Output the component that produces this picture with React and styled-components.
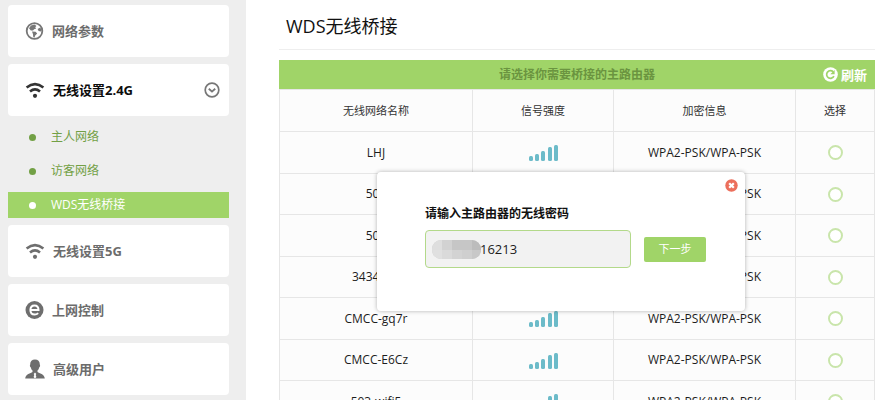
import React, { useState } from 'react'
import styled, { createGlobalStyle } from 'styled-components';

const GlobalStyle = createGlobalStyle`
  * {
    box-sizing: border-box;
  }

  body {
    margin: 0;
    background: #fff;
    color: #1c1c1c;
    font-family: "Open Sans", "Noto Sans CJK SC", sans-serif;
    font-size: 12px;
    overflow: hidden;
  }

  button, input {
    font-family: inherit;
  }
`

const Page = styled.div`
  display: grid;
  grid-template-columns: 246px 1fr;
  height: 100vh;
`

const Sidebar = styled.nav`
  display: flex;
  flex-direction: column;
  gap: 7px;
  padding: 5px 17px 5px 8px;
  background: #eeeeee;
  overflow: hidden;
`

const MenuButton = styled.button`
  display: flex;
  align-items: center;
  flex: none;
  gap: 8px;
  width: 100%;
  height: 52px;
  padding: 0 9px 0 17px;
  border: 0;
  border-radius: 4px;
  background: #fff;
  color: ${(props) => (props.$active ? '#0c0c0c' : '#6c6c6c')};
  font-size: 13px;
  font-weight: 700;
  line-height: 20px;
  text-align: left;
  cursor: pointer;

  span {
    flex: 1;
  }
`

const SubMenu = styled.ul`
  display: flex;
  flex-direction: column;
  gap: 8px;
  margin: 0;
  padding: 1px 0 0;
  list-style: none;
`

const SubLink = styled.a`
  display: flex;
  align-items: center;
  gap: 15px;
  height: 26px;
  padding-left: 21px;
  background: ${(props) => (props.$active ? '#a0d468' : 'transparent')};
  color: ${(props) => (props.$active ? '#fff' : '#72a045')};
  font-size: 12px;
  line-height: 20px;
  text-decoration: none;

  &::before {
    content: '';
    width: 7px;
    height: 7px;
    border-radius: 50%;
    background: currentColor;
  }
`

const Main = styled.main`
  position: relative;
  padding: 0 10px 0 33px;
  overflow: hidden;
`

const Title = styled.h1`
  height: 50px;
  margin: 0 0 10px;
  padding: 2px 7px 0;
  border-bottom: 1px solid #eeeeee;
  color: #111;
  font-size: 18px;
  font-weight: 400;
  line-height: 48px;
`

const TableBar = styled.div`
  display: grid;
  grid-template-columns: 1fr auto 1fr;
  align-items: center;
  height: 29px;
  padding: 0 8px;
  background: #a0d468;
`

const BarText = styled.h2`
  grid-column: 2;
  margin: 0;
  color: #6b9440;
  font-size: 12px;
  font-weight: 700;
  line-height: 20px;
`

const RefreshButton = styled.button`
  display: flex;
  align-items: center;
  justify-self: end;
  gap: 3px;
  padding: 0;
  border: 0;
  background: none;
  color: #fff;
  font-size: 13px;
  font-weight: 700;
  line-height: 20px;
  cursor: pointer;
`

const Table = styled.table`
  width: 100%;
  border-collapse: collapse;
  table-layout: fixed;
  background: #fcfcfc;
`

const Col = styled.col`
  width: ${(props) => props.$width};
`

const HeadCell = styled.th`
  height: 42px;
  padding: 0;
  border: 1px solid #e6e6e6;
  color: #333;
  font-size: 11px;
  font-weight: 400;
  line-height: 20px;
`

const Row = styled.tr`
  height: 42px;

  &:nth-child(even) {
    height: 41px;
  }
`

const Cell = styled.td`
  padding: 0;
  border: 1px solid #e6e6e6;
  font-size: 12px;
  line-height: 20px;
  text-align: center;

  svg {
    display: block;
    margin: 0 auto;
  }
`

const Radio = styled.input.attrs({ type: 'radio' })`
  appearance: none;
  display: block;
  width: 15px;
  height: 15px;
  margin: 0 auto;
  border: 2px solid #c9e5ab;
  border-radius: 50%;
  background: #fff;

  &:checked {
    background: #a0d468;
  }
`

const Dialog = styled.form`
  position: absolute;
  top: 172px;
  left: 131px;
  width: 368px;
  height: 139px;
  padding: 32px 39px 0 48px;
  border-radius: 4px;
  background: #fff;
  box-shadow: 0 0 4px rgba(0, 0, 0, 0.3);
`

const DialogLabel = styled.label`
  display: block;
  margin-bottom: 6px;
  color: #111;
  font-size: 12px;
  font-weight: 700;
  line-height: 20px;
`

const DialogRow = styled.div`
  display: flex;
  align-items: center;
  gap: 13px;
`

const PasswordBox = styled.div`
  position: relative;
  flex: 1;
`

const PasswordInput = styled.input`
  display: block;
  width: 100%;
  height: 38px;
  padding: 0 8px 0 54px;
  border: 1px solid #b3d98a;
  border-radius: 4px;
  outline: none;
  background: #f2f2f2;
  color: #1c1c1c;
  font-size: 13px;
`

const Mask = styled.svg`
  position: absolute;
  top: 10px;
  left: 7px;
`

const NextButton = styled.button`
  width: 62px;
  height: 25px;
  padding: 0;
  border: 0;
  border-radius: 2px;
  background: #a0d468;
  color: #fff;
  font-size: 11px;
  line-height: 20px;
  cursor: pointer;
`

const CloseButton = styled.button`
  position: absolute;
  top: 7px;
  right: 7px;
  display: flex;
  padding: 0;
  border: 0;
  background: none;
  cursor: pointer;
`

const GlobeIcon = () => (
  <svg width="19" height="20" viewBox="0 0 19 20">
    <circle cx="9.5" cy="10" r="7.8" fill="none" stroke="#777" strokeWidth="1.8" />
    <path d="M4 7.2 6 4.6 9.6 3.4 11.4 5l-1.2 1.2 1 1.4-2 .6-1.2 1.4-2.2-.2ZM7 10.6l3.6.2 1.6 1.6-2 2.2-.8 2.2-1.2-1-.2-2.6ZM12.6 8l2.6-1.6 1.4 2.6-.6 1.4-2.4-.4Z" fill="#777" />
  </svg>
)

const WifiIcon = ({ color }) => (
  <svg width="20" height="20" viewBox="0 0 20 20">
    <g fill="none" stroke={color} strokeWidth="2.6">
      <path d="M1.6 7.6Q10 .8 18.4 7.6" />
      <path d="M5 11.4q5-4.2 10 0" />
    </g>
    <circle cx="10" cy="15.8" r="2.1" fill={color} />
  </svg>
)

const BrowserIcon = () => (
  <svg width="19" height="20" viewBox="0 0 19 20">
    <circle cx="9.5" cy="10" r="9" fill="#6e6e6e" />
    <path d="M5.6 10.1h7.9c0-3-1.6-4.6-4-4.6S5.4 7.4 5.4 10.1s1.7 4.5 4.3 4.5c1.500 0 2.500-.5 3.400-1.500" fill="none" stroke="#fff" strokeWidth="2" />
  </svg>
)

const UserIcon = () => (
  <svg width="20" height="20" viewBox="0 0 20 20">
    <path d="M10 .6c3 0 4.8 1.7 4.8 4.6 0 .6.3.8.3 1.6s-.5 1.3-.9 1.6c-.4 1.5-1 2.5-1.700 3.200v1.300c1.800 1.400 6.900 1.700 7.300 6.700H.2c.4-5 5.500-5.300 7.300-6.700v-1.300c-.7-.7-1.300-1.700-1.700-3.200-.4-.3-.9-.8-.9-1.600s.3-1 .3-1.600C5.200 2.300 7 .6 10 .6Z" fill="#6e6e6e" />
    <path d="m10 13.600 1.300 1.300-.6 1 .7 2.200L10 19.600l-1.400-1.500.7-2.200-.6-1Z" fill="#fff" />
  </svg>
)

const ChevronIcon = () => (
  <svg width="16" height="16" viewBox="0 0 16 16" fill="none" stroke="#777">
    <circle cx="8" cy="8" r="6.8" strokeWidth="1.7" />
    <path d="m4.8 6.8 3.2 2.8 3.2-2.8" strokeWidth="1.9" />
  </svg>
)

const RefreshIcon = () => (
  <svg width="15" height="15" viewBox="0 0 15 15">
    <circle cx="7.5" cy="7.5" r="7.3" fill="#fff" />
    <path d="M10.9 9.1A3.8 3.8 0 1 1 10.2 4.9" fill="none" stroke="#a0d468" strokeWidth="1.7" />
    <path d="M11.6 3v4.3H7.3Z" fill="#a0d468" />
  </svg>
)

const CloseIcon = () => (
  <svg width="13" height="13" viewBox="0 0 13 13">
    <circle cx="6.5" cy="6.5" r="6.2" fill="#ec6f5c" />
    <path d="m4.2 4.2 4.6 4.6M8.8 4.2 4.2 8.8" stroke="#fff" strokeWidth="2.2" />
  </svg>
)

const SignalIcon = () => (
  <svg width="29" height="17" viewBox="0 0 29 17" fill="#6cbbc9">
    <rect x="0" y="12" width="4" height="5" rx="1.5" />
    <rect x="6" y="10" width="4" height="7" rx="1.5" />
    <rect x="12" y="7" width="4" height="10" rx="1.5" />
    <rect x="19" y="3" width="4" height="14" rx="1.5" />
    <rect x="25" y="1" width="4" height="16" rx="1.5" />
  </svg>
)

const subItems = ['主人网络', '访客网络', 'WDS无线桥接']

const networks = ['LHJ', '503', '502', '3434343', 'CMCC-gq7r', 'CMCC-E6Cz', '503-wifi5']

function App() {

  const [password, setPassword] = useState('16213')
  const [open, setOpen] = useState(true)

  return (
    <Page>
      <GlobalStyle />
      <Sidebar>
        <MenuButton><GlobeIcon /><span>网络参数</span></MenuButton>
        <MenuButton $active><WifiIcon color="#333" /><span>无线设置2.4G</span><ChevronIcon /></MenuButton>
        <SubMenu>
          {subItems.map((item, i) => (
            <li key={item}>
              <SubLink href="#" $active={i === 2}>{item}</SubLink>
            </li>
          ))}
        </SubMenu>
        <MenuButton><WifiIcon color="#6e6e6e" /><span>无线设置5G</span></MenuButton>
        <MenuButton><BrowserIcon /><span>上网控制</span></MenuButton>
        <MenuButton><UserIcon /><span>高级用户</span></MenuButton>
      </Sidebar>

      <Main>
        <Title>WDS无线桥接</Title>
        <TableBar>
          <BarText>请选择你需要桥接的主路由器</BarText>
          <RefreshButton type="button"><RefreshIcon />刷新</RefreshButton>
        </TableBar>
        <Table>
          <colgroup>
            <Col $width="auto" />
            <Col $width="141px" />
            <Col $width="182px" />
            <Col $width="79px" />
          </colgroup>
          <thead>
            <tr>
              <HeadCell>无线网络名称</HeadCell>
              <HeadCell>信号强度</HeadCell>
              <HeadCell>加密信息</HeadCell>
              <HeadCell>选择</HeadCell>
            </tr>
          </thead>
          <tbody>
            {networks.map((name) => (
              <Row key={name}>
                <Cell>{name}</Cell>
                <Cell><SignalIcon /></Cell>
                <Cell>WPA2-PSK/WPA-PSK</Cell>
                <Cell><Radio name="network" aria-label={name} /></Cell>
              </Row>
            ))}
          </tbody>
        </Table>

        {open && (
          <Dialog role="dialog" onSubmit={(e) => e.preventDefault()}>
            <CloseButton type="button" aria-label="关闭" onClick={() => setOpen(false)}>
              <CloseIcon />
            </CloseButton>
            <DialogLabel htmlFor="password">请输入主路由器的无线密码</DialogLabel>
            <DialogRow>
              <PasswordBox>
                <PasswordInput id="password" value={password} onChange={(e) => setPassword(e.target.value)} />
                <Mask width="49" height="20" viewBox="0 0 49 20">
                  <clipPath id="pill"><rect width="49" height="19" rx="9" /></clipPath>
                  <g clipPath="url(#pill)">
                    <rect width="49" height="20" fill="#cfcfcf" />
                    <rect width="10" height="10" fill="#dedede" />
                    <rect x="10" width="10" height="10" fill="#d2d2d2" />
                    <rect x="20" width="20" height="10" fill="#c6c6c6" />
                    <rect x="40" width="9" height="10" fill="#bcbcbc" />
                    <rect y="10" width="10" height="10" fill="#e0e0e0" />
                    <rect x="10" y="10" width="10" height="10" fill="#dadada" />
                    <rect x="20" y="10" width="10" height="10" fill="#d3d3d3" />
                    <rect x="40" y="10" width="9" height="10" fill="#c8c8c8" />
                  </g>
                </Mask>
              </PasswordBox>
              <NextButton type="submit">下一步</NextButton>
            </DialogRow>
          </Dialog>
        )}
      </Main>
    </Page>
  )
}

export default App
